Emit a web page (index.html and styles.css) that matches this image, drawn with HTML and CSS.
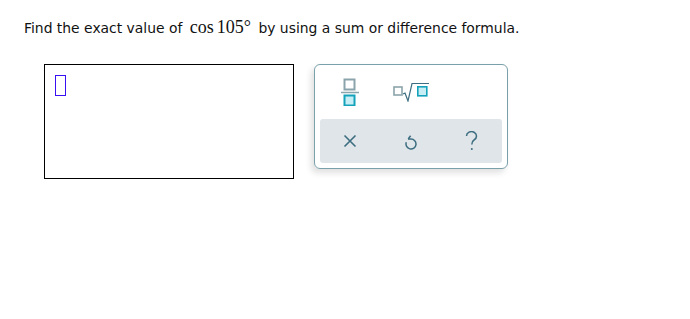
FILE: index.html
```html
<!DOCTYPE html>
<html lang="en">
<head>
    <meta charset="UTF-8">
    <meta name="viewport" content="width=device-width, initial-scale=1.0">
    <title>Question</title>
    <link rel="stylesheet" href="styles.css">
</head>
<body>
    <div class="page">
        <p class="question">Find the exact value of <span class="math">cos<span class="num">105°</span></span> by using a sum or difference formula.</p>
        <div class="work">
            <div class="answerBox">
                <span class="cursor"></span>
            </div>
            <div class="keypad">
                <div class="keyRow">
                    <button class="key">
                        <svg width="18" height="28" viewBox="0 0 18 28">
                            <rect x="3.5" y="1.5" width="10" height="10" fill="#fff" stroke="#8ba4ab" stroke-width="2"/>
                            <line x1="0" y1="14.5" x2="18" y2="14.5" stroke="#8ba4ab" stroke-width="1.5"/>
                            <rect x="3.5" y="17.5" width="10" height="10" fill="#c8eef5" stroke="#15a2bb" stroke-width="2"/>
                        </svg>
                    </button>
                    <button class="key">
                        <svg width="36" height="20" viewBox="0 0 36 20">
                            <rect x="1" y="5" width="8" height="8" fill="#fff" stroke="#8ba4ab" stroke-width="1.6"/>
                            <path d="M10 12 L12 11 L15 19 L19 1.5 L36 1.5" fill="none" stroke="#3d6d80" stroke-width="1.2"/>
                            <rect x="24.8" y="4.8" width="9" height="9" fill="#c8eef5" stroke="#15a2bb" stroke-width="1.6"/>
                        </svg>
                    </button>
                    <span class="key"></span>
                </div>
                <div class="keyRow actions">
                    <button class="key">
                        <svg width="14" height="14" viewBox="0 0 14 14">
                            <path d="M1.5 1.5 L12.5 12.5 M12.5 1.5 L1.5 12.5" stroke="#3d6d80" stroke-width="1.6" fill="none"/>
                        </svg>
                    </button>
                    <button class="key">
                        <svg width="14" height="17" viewBox="0 0 14 17">
                            <path d="M2.3 9.3 A5 5 0 1 0 7 6 L4 6" stroke="#3d6d80" stroke-width="1.5" fill="none"/>
                            <path d="M4.2 6 L6.6 2.8" stroke="#3d6d80" stroke-width="1.5" fill="none"/>
                        </svg>
                    </button>
                    <button class="key">
                        <svg width="14" height="20" viewBox="0 0 14 20">
                            <path d="M1.5 5 A5 4.5 0 1 1 9 9 C7.4 10 6.8 11 6.8 13.5" stroke="#3d6d80" stroke-width="1.5" fill="none"/>
                            <circle cx="6.8" cy="18" r="1" fill="#3d6d80"/>
                        </svg>
                    </button>
                </div>
            </div>
        </div>
    </div>
</body>
</html>
```

FILE: styles.css
```css
* {
    margin: 0;
    padding: 0;
    box-sizing: border-box;
}
body {
    background: #fff;
    font-family: 'DejaVu Sans', Verdana, sans-serif;
    color: #111;
}
.page {
    padding: 16px 0 0 24px;
}
.question {
    font-size: 13.9px;
    line-height: 22px;
}
.math {
    font-family: 'Liberation Serif', 'Times New Roman', serif;
    font-size: 18px;
    margin: 0 3px;
}
.num {
    margin-left: 3px;
}
.work {
    display: flex;
    align-items: flex-start;
    gap: 20px;
    padding: 25px 0 0 20px;
}
.answerBox {
    width: 250px;
    height: 115px;
    border: 1px solid #000;
    padding: 10px;
}
.cursor {
    display: block;
    width: 11px;
    height: 21px;
    border: 1px solid #3a10f0;
}
.keypad {
    width: 194px;
    height: 105px;
    border: 1px solid #7aa0aa;
    border-radius: 6px;
    padding: 0 5px 5px;
    box-shadow: -3px 4px 6px rgba(0, 0, 0, 0.12);
    display: flex;
    flex-direction: column;
}
.keyRow {
    display: grid;
    grid-template-columns: 1fr 1fr 1fr;
    height: 54px;
    align-items: center;
}
.keyRow.actions {
    height: 44px;
    background: #dfe5e8;
    border-radius: 3px;
}
.key {
    background: none;
    border: none;
    display: flex;
    justify-content: center;
    align-items: center;
}
```
